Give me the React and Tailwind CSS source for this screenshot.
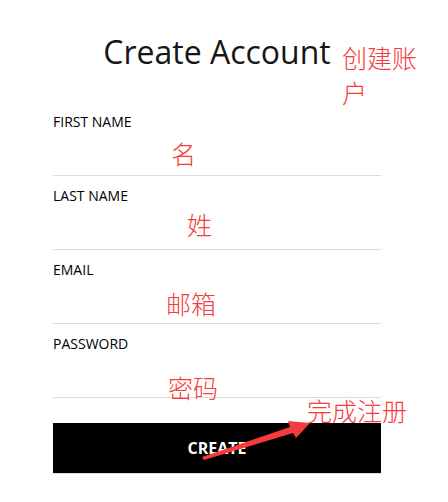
const fields = ['FIRST NAME', 'LAST NAME', 'EMAIL', 'PASSWORD'];

const notes = [
  { text: '名', cls: 'left-[171px] top-[141px]' },
  { text: '姓', cls: 'left-[187px] top-[212px]' },
  { text: '邮箱', cls: 'left-[166px] top-[291px]' },
  { text: '密码', cls: 'left-[168px] top-[375px]' },
  { text: '完成注册', cls: 'left-[307px] top-[398px]' },
];

function Field({ label }) {
  return (
    <div className="mt-[10px] first:mt-0">
      <div className="h-[20px] text-[14px] leading-[20px] text-black">{label}</div>
      <div className="h-[43px]" />
      <div className="h-px bg-[#dcdcdc]" />
    </div>
  );
}

export default function App() {
  return (
    <div
      className="relative h-[502px] w-[448px] overflow-hidden bg-white"
      style={{ fontFamily: '"Open Sans", "Liberation Sans", sans-serif' }}
    >
      <div className="ml-[53px] w-[328px] pt-[33px]">
        <h1 className="text-center text-[32px] leading-[38px] font-normal text-[#161616]">
          Create Account
        </h1>

        <form className="mt-[41px]" onSubmit={(e) => e.preventDefault()}>
          {fields.map((f) => (
            <Field key={f} label={f} />
          ))}
          <button
            type="submit"
            className="mt-[25px] flex h-[50px] w-full items-center justify-center bg-black text-[16px] font-bold text-white"
          >
            CREATE
          </button>
          <div className="h-px bg-[#dcdcdc]" />
        </form>
      </div>

      {/* red annotations */}
      <div className='pointer-events-none absolute inset-0 font-["Noto_Sans_CJK_SC",sans-serif] text-[25px] leading-[25px] font-light text-[#f53b3b]'>
        <div className="absolute left-[342px] top-[40px] w-[80px] leading-[35px]">创建账户</div>
        {notes.map((n) => (
          <div key={n.text} className={`absolute ${n.cls}`}>
            {n.text}
          </div>
        ))}
        <svg className="absolute left-0 top-0" width="448" height="502">
          <polygon
            points="202,457 290,427 288,421 310,423 296,438 293,433 204,460"
            fill="#f53b3b"
          />
        </svg>
      </div>
    </div>
  );
}
